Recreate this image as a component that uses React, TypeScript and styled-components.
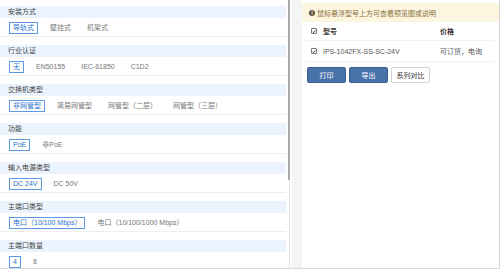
import React from "react";
import styled, { createGlobalStyle } from "styled-components";

const Global = createGlobalStyle`
  html, body { margin: 0; padding: 0; background: #fff; }
  body {
    font-family: "Liberation Sans", Arial, "Noto Sans CJK SC", sans-serif;
    font-size: 7px;
    color: #333;
  }
  * { box-sizing: border-box; }
`;

const Page = styled.div`
  display: flex;
  width: 500px;
  height: 269px;
  overflow: hidden;
  border-bottom: 1px solid #dcdcdc;
`;

const FilterPanel = styled.div`
  display: flex;
  width: 292px;
  height: 268px;
  overflow: hidden;
`;

const FilterList = styled.div`
  width: 286px;
  padding-top: 6px;
  display: flex;
  flex-direction: column;
`;

const Section = styled.div`
  border-bottom: 1px solid #eeeeee;
  margin-bottom: 8px;
  padding-bottom: 2px;
`;

const SectionTitle = styled.div`
  height: 12px;
  line-height: 12px;
  background: #ebf4fe;
  padding-left: 8px;
  color: #444;
  white-space: nowrap;
`;

const OptionRow = styled.div`
  display: flex;
  gap: 8px;
  padding: 4px 0 0 9px;
`;

const Option = styled.span<{ $active?: boolean }>`
  height: 12px;
  line-height: 10px;
  padding: 0 3px;
  border: 1px solid ${(p) => (p.$active ? "#5b9be6" : "transparent")};
  color: ${(p) => (p.$active ? "#2d73d2" : "#777")};
  white-space: nowrap;
`;

const ScrollTrack = styled.div`
  width: 6px;
  display: flex;
  justify-content: center;
  background: linear-gradient(to right, transparent 3px, #e2e2e2 3px, #e2e2e2 4px, transparent 4px);
`;

const ScrollThumb = styled.div`
  width: 2px;
  height: 180px;
  background: #a8a8a8;
`;

const Gutter = styled.div`
  width: 10px;
  background: #f4f4f4;
`;

const ResultPanel = styled.div`
  flex: 1;
  padding-top: 3px;
  border-right: 1px solid #d8d8d8;
  display: flex;
  flex-direction: column;
`;

const Notice = styled.div`
  height: 19px;
  display: flex;
  align-items: center;
  gap: 2px;
  padding-left: 7px;
  background: #fcf6e1;
  color: #8a6d3b;
  white-space: nowrap;
`;

const NoticeIcon = styled.span`
  width: 6px;
  height: 6px;
  border-radius: 50%;
  background: #5e5440;
  color: #fff;
  font-size: 5px;
  line-height: 6px;
  text-align: center;
  font-weight: bold;
`;

const Table = styled.div`
  display: flex;
  flex-direction: column;
  padding: 0 4px;
`;

const TableRow = styled.div<{ $head?: boolean }>`
  display: grid;
  grid-template-columns: 17px 117px 1fr;
  align-items: center;
  height: ${(p) => (p.$head ? "19px" : "21px")};
  font-weight: ${(p) => (p.$head ? "bold" : "normal")};
  color: ${(p) => (p.$head ? "#333" : "#555")};
  border-bottom: 1px solid #f2f2f2;
  white-space: nowrap;
`;

const Check = styled.span`
  width: 6px;
  height: 6px;
  margin-left: 5px;
  border: 1px solid #777;
  border-radius: 1px;
  background: #fff;
  display: flex;
  align-items: center;
  justify-content: center;
`;

const ButtonBar = styled.div`
  display: flex;
  gap: 3px;
  padding: 5px 0 0 5px;
`;

const Button = styled.button<{ $primary?: boolean }>`
  height: 16px;
  width: 39px;
  padding: 0;
  font-family: inherit;
  font-size: 7px;
  border-radius: 2px;
  border: 1px solid ${(p) => (p.$primary ? "#3b5f91" : "#d4d4d4")};
  background: ${(p) => (p.$primary ? "#4a72aa" : "#fff")};
  color: ${(p) => (p.$primary ? "#fff" : "#333")};
`;

const CheckMark = () => (
  <svg width="5" height="5" viewBox="0 0 10 10">
    <path d="M1.5 5.5 L4 8 L8.5 2" stroke="#222" strokeWidth="2" fill="none" />
  </svg>
);

const sections: { title: string; options: string[] }[] = [
  { title: "安装方式", options: ["导轨式", "壁挂式", "机架式"] },
  { title: "行业认证", options: ["无", "EN50155", "IEC-61850", "C1D2"] },
  { title: "交换机类型", options: ["非网管型", "简易网管型", "网管型（二层）", "网管型（三层）"] },
  { title: "功能", options: ["PoE", "非PoE"] },
  { title: "输入电源类型", options: ["DC 24V", "DC 50V"] },
  { title: "主端口类型", options: ["电口（10/100 Mbps）", "电口（10/100/1000 Mbps）"] },
  { title: "主端口数量", options: ["4", "8"] },
];

export default function App() {
  return (
    <>
      <Global />
      <Page>
        <FilterPanel>
          <FilterList>
            {sections.map((s) => (
              <Section key={s.title}>
                <SectionTitle>{s.title}</SectionTitle>
                <OptionRow>
                  {s.options.map((o, i) => (
                    <Option key={o} $active={i === 0}>
                      {o}
                    </Option>
                  ))}
                </OptionRow>
              </Section>
            ))}
          </FilterList>
          <ScrollTrack>
            <ScrollThumb />
          </ScrollTrack>
        </FilterPanel>
        <Gutter />
        <ResultPanel>
          <Notice>
            <NoticeIcon>!</NoticeIcon>
            鼠标悬浮型号上方可查看预览图或说明
          </Notice>
          <Table>
            <TableRow $head>
              <Check>
                <CheckMark />
              </Check>
              <span>型号</span>
              <span>价格</span>
            </TableRow>
            <TableRow>
              <Check>
                <CheckMark />
              </Check>
              <span>IPS-1042FX-SS-SC-24V</span>
              <span>可订货，电询</span>
            </TableRow>
          </Table>
          <ButtonBar>
            <Button $primary>打印</Button>
            <Button $primary>导出</Button>
            <Button>系列对比</Button>
          </ButtonBar>
        </ResultPanel>
      </Page>
    </>
  );
}
